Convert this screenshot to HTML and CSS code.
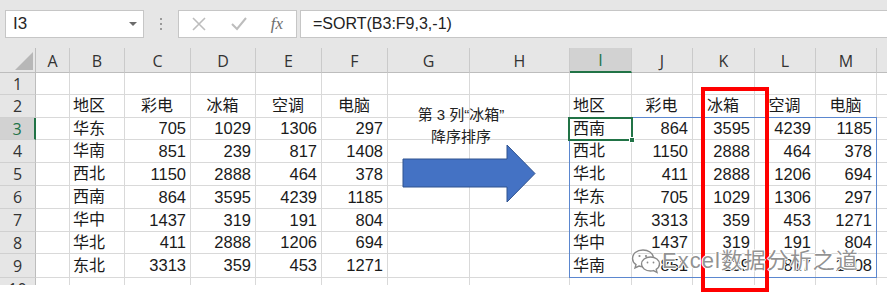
FILE: index.html
```html
<!DOCTYPE html>
<html lang="zh-CN">
<head>
    <meta charset="UTF-8">
    <title>SORT</title>
    <link rel="stylesheet" href="styles.css">
</head>
<body>
    <div class="window">
        <!-- Formula bar -->
        <div class="formula-bar">
            <div class="name-box"><span>I3</span><span class="drop"></span></div>
            <div class="grip"><i></i><i></i><i></i></div>
            <div class="fx-box">
                <svg class="icon" width="16" height="16" viewBox="0 0 16 16"><path d="M2 2 L14 14 M14 2 L2 14" stroke="#bdbdbd" stroke-width="1.6" fill="none"/></svg>
                <svg class="icon" width="18" height="16" viewBox="0 0 18 16"><path d="M2 8 L7 13 L16 2" stroke="#bdbdbd" stroke-width="2" fill="none"/></svg>
                <span class="fx">fx</span>
            </div>
            <div class="formula">=SORT(B3:F9,3,-1)</div>
        </div>

        <!-- Sheet grid -->
        <div class="sheet">
            <div class="ch corner"><i></i></div><div class="ch">A</div><div class="ch">B</div><div class="ch">C</div><div class="ch">D</div><div class="ch">E</div><div class="ch">F</div><div class="ch">G</div><div class="ch">H</div><div class="ch active">I</div><div class="ch">J</div><div class="ch">K</div><div class="ch">L</div><div class="ch">M</div><div class="ch last"></div>

            <div class="rh">1</div><div class="c"></div><div class="c"></div><div class="c"></div><div class="c"></div><div class="c"></div><div class="c"></div><div class="c"></div><div class="c"></div><div class="c"></div><div class="c"></div><div class="c"></div><div class="c"></div><div class="c"></div><div class="c last"></div>

            <div class="rh">2</div><div class="c"></div><div class="c">地区</div><div class="c h">彩电</div><div class="c h">冰箱</div><div class="c h">空调</div><div class="c h">电脑</div><div class="c"></div><div class="c"></div><div class="c">地区</div><div class="c h">彩电</div><div class="c h">冰箱</div><div class="c h">空调</div><div class="c h">电脑</div><div class="c last"></div>

            <div class="rh active">3</div><div class="c"></div><div class="c">华东</div><div class="c n">705</div><div class="c n">1029</div><div class="c n">1306</div><div class="c n">297</div><div class="c"></div><div class="c"></div><div class="c">西南</div><div class="c n">864</div><div class="c n">3595</div><div class="c n">4239</div><div class="c n">1185</div><div class="c last"></div>

            <div class="rh">4</div><div class="c"></div><div class="c">华南</div><div class="c n">851</div><div class="c n">239</div><div class="c n">817</div><div class="c n">1408</div><div class="c"></div><div class="c"></div><div class="c">西北</div><div class="c n">1150</div><div class="c n">2888</div><div class="c n">464</div><div class="c n">378</div><div class="c last"></div>

            <div class="rh">5</div><div class="c"></div><div class="c">西北</div><div class="c n">1150</div><div class="c n">2888</div><div class="c n">464</div><div class="c n">378</div><div class="c"></div><div class="c"></div><div class="c">华北</div><div class="c n">411</div><div class="c n">2888</div><div class="c n">1206</div><div class="c n">694</div><div class="c last"></div>

            <div class="rh">6</div><div class="c"></div><div class="c">西南</div><div class="c n">864</div><div class="c n">3595</div><div class="c n">4239</div><div class="c n">1185</div><div class="c"></div><div class="c"></div><div class="c">华东</div><div class="c n">705</div><div class="c n">1029</div><div class="c n">1306</div><div class="c n">297</div><div class="c last"></div>

            <div class="rh">7</div><div class="c"></div><div class="c">华中</div><div class="c n">1437</div><div class="c n">319</div><div class="c n">191</div><div class="c n">804</div><div class="c"></div><div class="c"></div><div class="c">东北</div><div class="c n">3313</div><div class="c n">359</div><div class="c n">453</div><div class="c n">1271</div><div class="c last"></div>

            <div class="rh">8</div><div class="c"></div><div class="c">华北</div><div class="c n">411</div><div class="c n">2888</div><div class="c n">1206</div><div class="c n">694</div><div class="c"></div><div class="c"></div><div class="c">华中</div><div class="c n">1437</div><div class="c n">319</div><div class="c n">191</div><div class="c n">804</div><div class="c last"></div>

            <div class="rh">9</div><div class="c"></div><div class="c">东北</div><div class="c n">3313</div><div class="c n">359</div><div class="c n">453</div><div class="c n">1271</div><div class="c"></div><div class="c"></div><div class="c">华南</div><div class="c n">851</div><div class="c n">239</div><div class="c n">817</div><div class="c n">1408</div><div class="c last"></div>

            <div class="rh">10</div><div class="c"></div><div class="c"></div><div class="c"></div><div class="c"></div><div class="c"></div><div class="c"></div><div class="c"></div><div class="c"></div><div class="c"></div><div class="c"></div><div class="c"></div><div class="c"></div><div class="c"></div><div class="c last"></div>
        </div>

        <!-- Overlays -->
        <div class="range"></div>
        <div class="selection"><span class="handle"></span></div>
        <div class="red-box"></div>

        <svg class="arrow" width="135" height="60" viewBox="0 0 135 60">
            <polygon points="1,15 105,15 105,1 133,29.5 105,58 105,43 1,43" fill="#4472c4" stroke="#2f528f" stroke-width="1"/>
        </svg>
        <div class="arrow-label">第 3 列“冰箱”<br>降序排序</div>

        <div class="watermark">
            <svg width="30" height="28" viewBox="0 0 30 28">
                <g fill="none" stroke="#fff" stroke-width="3.5">
                    <path d="M12 3 C5.5 3 1.5 7 1.5 11.5 C1.5 14 3 16.2 5 17.6 L4 21 L8 19 C9.2 19.4 10.6 19.6 12 19.6"/>
                    <ellipse cx="19.5" cy="17" rx="9" ry="7"/>
                </g>
                <g fill="none" stroke="#8a8a8a" stroke-width="1.4">
                    <path d="M12 3 C5.5 3 1.5 7 1.5 11.5 C1.5 14 3 16.2 5 17.6 L4 21 L8 19 C9.2 19.4 10.6 19.6 12 19.6"/>
                    <path d="M12 3 C17.5 3 21.5 6 22.3 10"/>
                    <path d="M19.5 10 C14.5 10 10.5 13 10.5 17 C10.5 21 14.5 24 19.5 24 C20.6 24 21.6 23.9 22.5 23.6 L26 25.5 L25.2 22.3 C27.3 21 28.5 19.1 28.5 17 C28.5 13 24.5 10 19.5 10 Z"/>
                </g>
                <g fill="#8a8a8a">
                    <circle cx="8.5" cy="9" r="1.1"/>
                    <circle cx="15" cy="9" r="1.1"/>
                    <circle cx="16.5" cy="15.5" r="0.9"/>
                    <circle cx="22.5" cy="15.5" r="0.9"/>
                </g>
            </svg>
            <span>Excel数据分析之道</span>
        </div>
    </div>
</body>
</html>
```

FILE: styles.css
```css
body {
    margin: 0;
    background-color: #ffffff;
    font-family: "Liberation Sans", "Noto Sans CJK SC", sans-serif;
    color: #1a1a1a;
}
.window {
    position: relative;
    width: 887px;
    height: 302px;
    overflow: hidden;
}

/* Formula bar */
.formula-bar {
    height: 48px;
    box-sizing: border-box;
    padding-top: 10px;
    background-color: #e6e6e6;
    display: flex;
}
.name-box {
    margin-left: 5px;
    width: 139px;
    height: 28px;
    box-sizing: border-box;
    border: 1px solid #c6c6c6;
    background-color: #ffffff;
    display: flex;
    align-items: center;
    justify-content: space-between;
    padding: 0 6px 0 7px;
    font-size: 17px;
    color: #262626;
}
.drop {
    width: 0;
    height: 0;
    border-left: 4px solid transparent;
    border-right: 4px solid transparent;
    border-top: 4px solid #6b6b6b;
}
.grip {
    width: 34px;
    display: flex;
    flex-direction: column;
    align-items: center;
    justify-content: center;
    gap: 3px;
    height: 28px;
}
.grip i {
    display: block;
    width: 2px;
    height: 2px;
    background-color: #9a9a9a;
}
.fx-box {
    width: 119px;
    height: 28px;
    box-sizing: border-box;
    border: 1px solid #c6c6c6;
    background-color: #ffffff;
    display: flex;
    align-items: center;
    justify-content: space-between;
    padding: 0 13px 0 12px;
}
.fx {
    font-family: "Liberation Serif", serif;
    font-style: italic;
    font-size: 17px;
    color: #6d6d6d;
}
.formula {
    flex: 1;
    margin-left: 3px;
    margin-right: -2px;
    height: 28px;
    box-sizing: border-box;
    border: 1px solid #c6c6c6;
    background-color: #ffffff;
    padding-left: 12px;
    display: flex;
    align-items: center;
    font-size: 16px;
    color: #222222;
}

/* Sheet */
.sheet {
    display: grid;
    grid-template-columns: 36px 34px 55px 66px 65px 66px 66px 82px 100px 62px 61px 62px 61px 61px 10px;
    grid-template-rows: 25px 22px 23px 22px 23px 23px 23px 23px 22px 24px 23px;
    height: 237px;
    overflow: hidden;
}
.sheet > div {
    box-sizing: border-box;
    display: flex;
    align-items: center;
    line-height: 1;
}
.ch {
    background-color: #e6e6e6;
    border-right: 1px solid #cacaca;
    border-bottom: 1px solid #bdbdbd;
    justify-content: center;
    font-family: "Open Sans", sans-serif;
    font-size: 16px;
    color: #333333;
    padding-top: 1px;
}
.ch.active {
    background-color: #d2d2d2;
    color: #217346;
    border-bottom: 2px solid #217346;
}
.ch.corner {
    justify-content: flex-end;
    align-items: flex-end;
    padding: 0 2px 2px 0;
    border-right-color: #bdbdbd;
}
.ch.corner i {
    display: block;
    width: 0;
    height: 0;
    border-left: 18px solid transparent;
    border-bottom: 18px solid #b7b7b7;
}
.rh {
    background-color: #e6e6e6;
    border-right: 1px solid #bdbdbd;
    border-bottom: 1px solid #d0d0d0;
    justify-content: center;
    font-family: "Open Sans", sans-serif;
    font-size: 16px;
    color: #333333;
}
.rh.active {
    background-color: #d2d2d2;
    color: #217346;
    border-right: 2px solid #217346;
}
.c {
    border-right: 1px solid #d9d9d9;
    border-bottom: 1px solid #d9d9d9;
    padding: 0 4px 0 3px;
    font-size: 16px;
}
.c.n {
    justify-content: flex-end;
    font-size: 16.5px;
}
.c.h {
    justify-content: center;
}
.sheet > .last {
    border-right: none;
}

/* Overlays */
.range {
    position: absolute;
    left: 569px;
    top: 117px;
    width: 308px;
    height: 161px;
    box-sizing: border-box;
    border: 1px solid #5b87cf;
}
.selection {
    position: absolute;
    left: 568px;
    top: 117px;
    width: 65px;
    height: 24px;
    box-sizing: border-box;
    border: 2px solid #217346;
}
.handle {
    position: absolute;
    right: -4px;
    bottom: -4px;
    width: 6px;
    height: 6px;
    box-sizing: border-box;
    background-color: #217346;
    border: 1px solid #ffffff;
}
.red-box {
    position: absolute;
    left: 701px;
    top: 87px;
    width: 68px;
    height: 205px;
    box-sizing: border-box;
    border: 4px solid #ff0000;
}
.arrow {
    position: absolute;
    left: 402px;
    top: 144px;
}
.arrow-label {
    position: absolute;
    left: 400px;
    top: 104px;
    width: 122px;
    text-align: center;
    font-size: 15px;
    line-height: 22px;
    color: #222222;
}
.watermark {
    position: absolute;
    left: 631px;
    top: 247px;
    display: flex;
    align-items: center;
    gap: 1px;
}
.watermark span {
    font-family: "Liberation Sans", "Noto Sans CJK SC", sans-serif;
    font-size: 22px;
    line-height: 28px;
    letter-spacing: 1px;
    color: rgba(110, 110, 110, 0.75);
    text-shadow: 1px 0 0 #fff, -1px 0 0 #fff, 0 1px 0 #fff, 0 -1px 0 #fff;
}
```
